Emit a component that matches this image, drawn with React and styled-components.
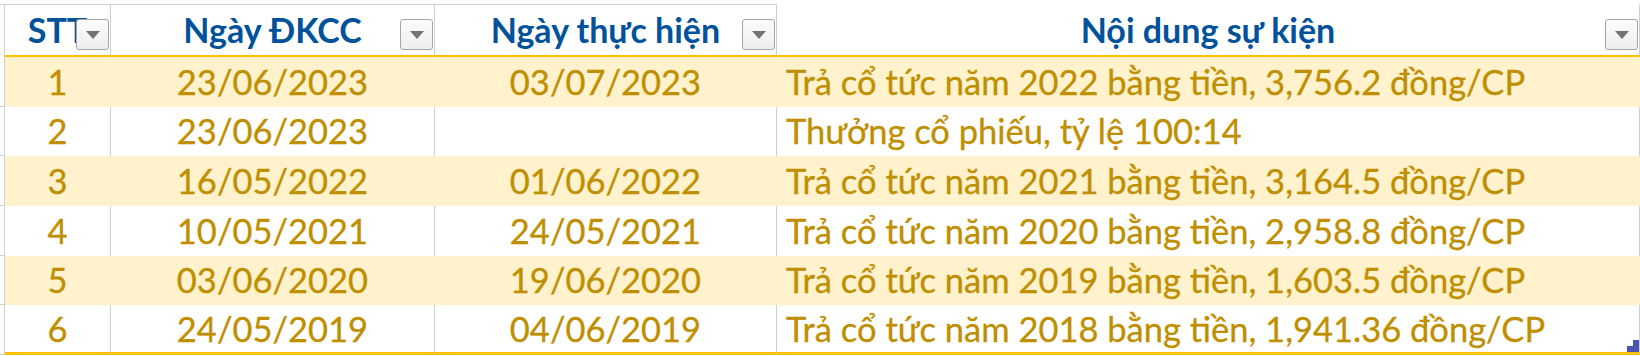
import React from 'react';
import styled, { createGlobalStyle, css } from 'styled-components';

const GlobalStyle = createGlobalStyle`
  html, body {
    margin: 0;
    padding: 0;
    background: #ffffff;
  }
  body {
    font-family: Lato, 'Noto Sans', sans-serif;
  }
`;

const GRID = '#d0d0d0';
const BAND = '#fff2cc';
const GOLD = '#bf8f00';
const ORANGE = '#ffc000';

const StyledSheet = styled.div`
  display: grid;
  grid-template-columns: 5px 106px 324px 342px 863px;
  grid-template-rows: 53px repeat(6, 49.67px);
  padding-top: 4px;
  width: 1640px;
  overflow: hidden;
`;

const GutterCell = styled.div`
  border-right: 1px solid ${GRID};
  ${({ $head }) =>
    $head
      ? css`
          border-top: 1px solid ${GRID};
        `
      : css`
          border-bottom: 1px solid ${GRID};
        `}
`;

const HeadCell = styled.div`
  position: relative;
  display: flex;
  align-items: center;
  justify-content: center;
  border-top: 1px solid ${GRID};
  border-right: 1px solid ${GRID};
  border-bottom: 2px solid ${ORANGE};
  font-size: 34px;
  font-weight: 700;
  color: #00529b;
  white-space: nowrap;
  overflow: hidden;
  padding-bottom: 1px;

  ${({ $selected }) =>
    $selected &&
    css`
      border-top-color: transparent;
      &::before {
        content: '';
        position: absolute;
        left: 0;
        right: 0;
        top: -3px;
        height: 3px;
        background: #107c41;
      }
    `}
`;

const FilterButton = styled.span`
  position: absolute;
  right: 1px;
  top: 14px;
  width: 33px;
  height: 31px;
  box-sizing: border-box;
  border: 1px solid #a6a6a6;
  border-radius: 3px;
  background: linear-gradient(#fcfcfc, #eeeeee);
  display: flex;
  align-items: center;
  justify-content: center;

  &::after {
    content: '';
    width: 0;
    height: 0;
    border-left: 7px solid transparent;
    border-right: 7px solid transparent;
    border-top: 8px solid #737373;
  }
`;

const Cell = styled.div`
  position: relative;
  display: flex;
  align-items: center;
  justify-content: ${({ $align }) => ($align === 'left' ? 'flex-start' : 'center')};
  padding-left: ${({ $align }) => ($align === 'left' ? '9px' : '0')};
  padding-bottom: 1px;
  background: ${({ $band }) => ($band ? BAND : '#ffffff')};
  border-right: 1px solid ${({ $band }) => ($band ? BAND : GRID)};
  border-bottom: ${({ $last }) => ($last ? `3px solid ${ORANGE}` : 'none')};
  font-size: 34.5px;
  color: ${GOLD};
  -webkit-text-stroke: 0.3px ${GOLD};
  white-space: nowrap;
  overflow: hidden;
`;

const ResizeHandle = styled.svg`
  position: absolute;
  right: 0;
  bottom: 0;
`;

const rows = [
  ['1', '23/06/2023', '03/07/2023', 'Trả cổ tức năm 2022 bằng tiền, 3,756.2 đồng/CP'],
  ['2', '23/06/2023', '', 'Thưởng cổ phiếu, tỷ lệ 100:14'],
  ['3', '16/05/2022', '01/06/2022', 'Trả cổ tức năm 2021 bằng tiền, 3,164.5 đồng/CP'],
  ['4', '10/05/2021', '24/05/2021', 'Trả cổ tức năm 2020 bằng tiền, 2,958.8 đồng/CP'],
  ['5', '03/06/2020', '19/06/2020', 'Trả cổ tức năm 2019 bằng tiền, 1,603.5 đồng/CP'],
  ['6', '24/05/2019', '04/06/2019', 'Trả cổ tức năm 2018 bằng tiền, 1,941.36 đồng/CP'],
];

const headers = ['STT', 'Ngày ĐKCC', 'Ngày thực hiện', 'Nội dung sự kiện'];

const App = () => {
  return (
    <>
      <GlobalStyle />
      <StyledSheet>
        <GutterCell $head />
        {headers.map((h, i) => (
          <HeadCell key={h} $selected={i === 3}>
            {h}
            <FilterButton />
          </HeadCell>
        ))}

        {rows.map((r, i) => {
          const band = i % 2 === 0;
          const last = i === rows.length - 1;
          return (
            <React.Fragment key={r[0]}>
              <GutterCell />
              <Cell $band={band} $last={last}>{r[0]}</Cell>
              <Cell $band={band} $last={last}>{r[1]}</Cell>
              <Cell $band={band} $last={last}>{r[2]}</Cell>
              <Cell $band={band} $last={last} $align="left">
                {r[3]}
                {last && (
                  <ResizeHandle width="12" height="12" viewBox="0 0 12 12">
                    <path d="M6 0h6v12H0V6h6z" fill="#4b56b0" />
                  </ResizeHandle>
                )}
              </Cell>
            </React.Fragment>
          );
        })}
      </StyledSheet>
    </>
  );
};

export default App;
